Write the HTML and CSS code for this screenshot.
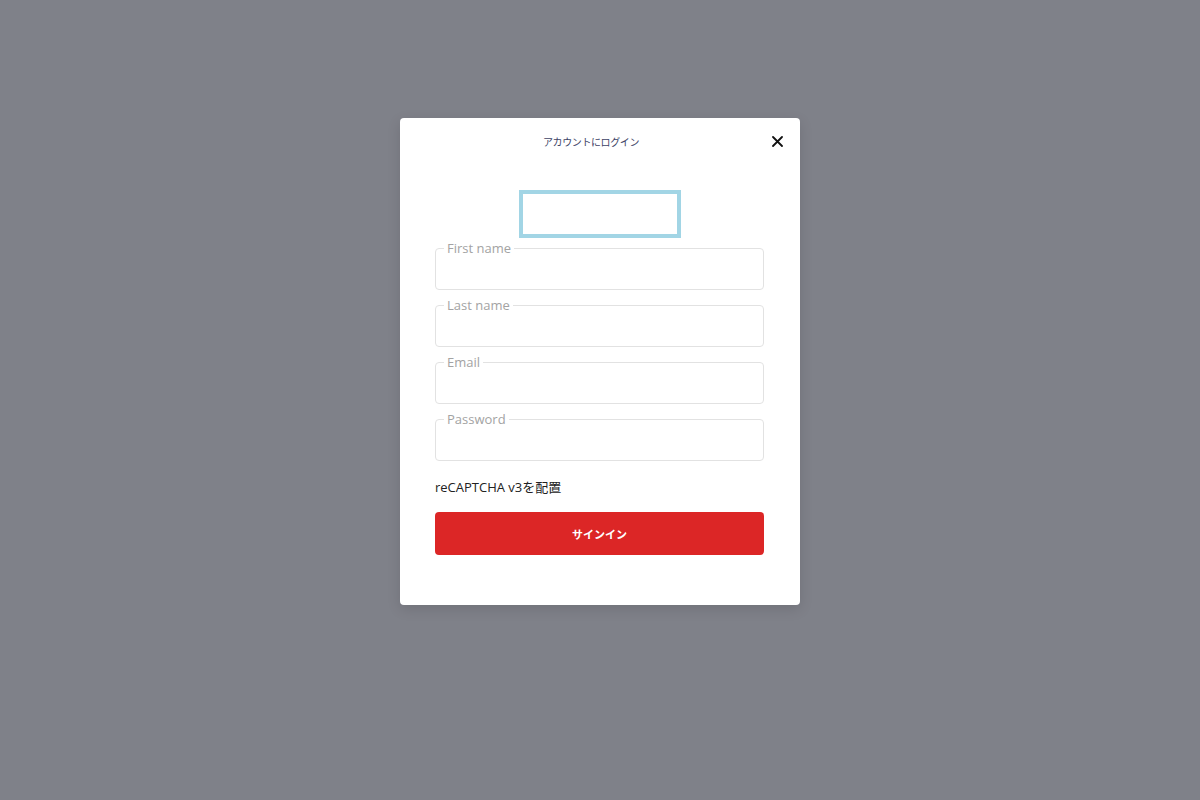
FILE: index.html
```html
<!DOCTYPE html>
<html lang="ja">
  <head>
    <meta charset="UTF-8" />
    <meta name="viewport" content="width=device-width, initial-scale=1.0" />
    <title>アカウントにログイン</title>
    <link rel="stylesheet" href="styles.css">
  </head>
  <body>
    <div class="overlay">
      <div class="modal">
        <div class="modal-header">
          <span></span>
          <h1 class="modal-title">アカウントにログイン</h1>
          <button class="close" aria-label="close">
            <svg width="11" height="11" viewBox="0 0 11 11">
              <path d="M1 1 L10 10 M10 1 L1 10" stroke="#111" stroke-width="1.8" stroke-linecap="round" />
            </svg>
          </button>
        </div>
        <div class="logo"></div>
        <form class="form">
          <fieldset class="campo">
            <legend>First name</legend>
            <input type="text" />
          </fieldset>
          <fieldset class="campo">
            <legend>Last name</legend>
            <input type="text" />
          </fieldset>
          <fieldset class="campo">
            <legend>Email</legend>
            <input type="email" />
          </fieldset>
          <fieldset class="campo">
            <legend>Password</legend>
            <input type="password" />
          </fieldset>
          <p class="captcha">reCAPTCHA v3を配置</p>
          <button type="button" class="signin">サインイン</button>
        </form>
      </div>
    </div>
  </body>
</html>
```

FILE: styles.css
```css
body{
    margin: 0;
    background-color: #7f8189;
    font-family: "Open Sans", "Noto Sans CJK JP", sans-serif;
}
.overlay{
    display: flex;
    justify-content: center;
    padding-top: 118px;
    height: 800px;
    box-sizing: border-box;
}
.modal{
    width: 400px;
    height: 487px;
    box-sizing: border-box;
    background-color: #fff;
    border-radius: 4px;
    box-shadow: 0 4px 14px rgba(0, 0, 0, 0.12);
}
.modal-header{
    display: grid;
    grid-template-columns: 1fr auto 1fr;
    align-items: center;
    height: 46px;
    padding: 0 17px;
}
.modal-title{
    margin: 0 18px 0 0;
    font-size: 10px;
    font-weight: 400;
    letter-spacing: -0.4px;
    color: #3d4366;
}
.close{
    justify-self: end;
    display: flex;
    border: none;
    background: none;
    padding: 0;
    cursor: pointer;
}
.logo{
    width: 162px;
    height: 48px;
    box-sizing: border-box;
    border: 4px solid #a2d5e5;
    margin: 26px auto 0;
}
.form{
    display: flex;
    flex-direction: column;
    gap: 7px;
    padding: 2px 36px 0 35px;
}
.campo{
    margin: 0;
    padding: 0 8px;
    border: 1px solid #e2e2e2;
    border-radius: 4px;
}
.campo legend{
    padding: 0 3px;
    font-size: 13px;
    line-height: 16px;
    color: #a3a3a3;
}
.campo input{
    display: block;
    width: 100%;
    height: 33px;
    border: none;
    outline: none;
    padding: 0;
    background: transparent;
}
.captcha{
    margin: 9px 0 0;
    font-size: 13px;
    line-height: 20px;
    color: #222;
}
.signin{
    margin-top: 8px;
    height: 43px;
    border: none;
    border-radius: 4px;
    background-color: #dc2626;
    color: #fff;
    font-family: "Open Sans", "Noto Sans CJK JP", sans-serif;
    font-size: 11px;
    font-weight: 600;
    cursor: pointer;
}
```
